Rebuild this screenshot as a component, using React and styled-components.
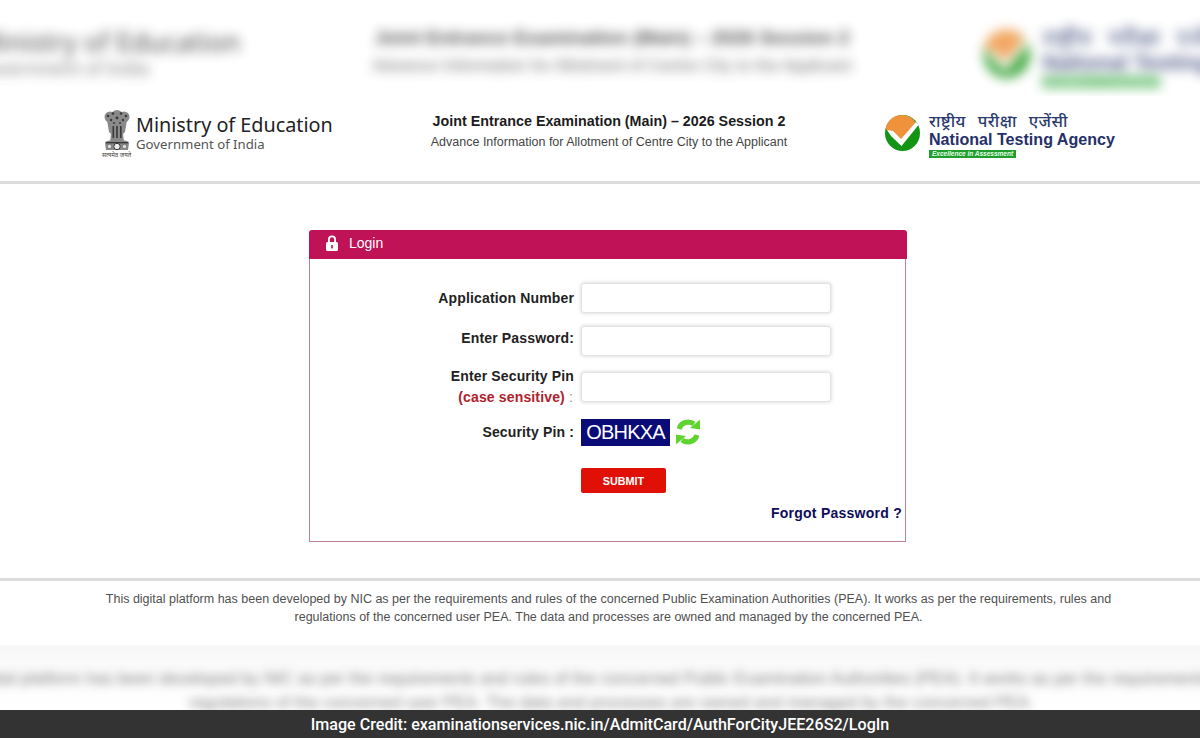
import React from "react";
import styled, { createGlobalStyle } from "styled-components";

const Global = createGlobalStyle`
  html, body { margin: 0; padding: 0; background: #fff; }
  * { box-sizing: border-box; }
  body { font-family: "Liberation Sans", Arial, sans-serif; }
`;

const Page = styled.div`
  width: 1200px;
  height: 738px;
  overflow: hidden;
  display: flex;
  flex-direction: column;
  background: #fff;
`;

const BlurBand = styled.div`
  height: ${p => p.$h}px;
  flex: none;
  overflow: hidden;
  background: ${p => p.$bg || "#fff"};
`;

const BlurLayer = styled.div`
  transform: translateY(${p => p.$y}px) scale(1.345);
  transform-origin: top center;
  filter: blur(${p => p.$blur}px);
  opacity: ${p => p.$op};
`;

const Masthead = styled.header`
  height: 85px;
  flex: none;
  display: flex;
  justify-content: space-between;
  padding: 14px 85px 0 100px;
`;

const Brand = styled.div`
  display: flex;
  width: 233px;
  height: 50px;
  gap: 3px;
`;

const EmblemBox = styled.div`
  width: 33px;
  flex: none;
  display: flex;
  flex-direction: column;
  align-items: center;
`;

const EmblemMotto = styled.span`
  font: 6px/7px "Noto Sans", "Noto Sans Devanagari", "Liberation Sans", sans-serif;
  color: #444;
  white-space: nowrap;
`;

const BrandText = styled.div`
  font-family: "Noto Sans", "Open Sans", sans-serif;
  padding-top: 2px;
`;

const Ministry = styled.div`
  font-size: 19.8px;
  line-height: 26px;
  color: #222;
  white-space: nowrap;
`;

const Government = styled.div`
  font-size: 13.2px;
  line-height: 13px;
  color: #555;
  white-space: nowrap;
`;

const Exam = styled.div`
  width: 357px;
  text-align: center;
  padding-top: 2px;
`;

const ExamTitle = styled.div`
  font-size: 14.3px;
  font-weight: 700;
  line-height: 18px;
  color: #1c1c1c;
  white-space: nowrap;
`;

const ExamSub = styled.div`
  font-size: 12.5px;
  line-height: 16px;
  margin-top: 4px;
  color: #444;
  white-space: nowrap;
`;

const Agency = styled.div`
  display: flex;
  width: 230px;
  gap: 9px;
`;

const AgencyMark = styled.svg`
  width: 35px;
  height: 36px;
  margin-top: 5px;
  flex: none;
`;

const AgencyLines = styled.div`
  padding-top: 2px;
`;

const AgencyHindi = styled.div`
  font: 500 16.5px/18px "Noto Sans", "Noto Sans Devanagari", sans-serif;
  color: #2a3a6e;
  letter-spacing: .5px;
  white-space: nowrap;
  word-spacing: 7px;
`;

const AgencyName = styled.div`
  font-size: 16.1px;
  font-weight: 700;
  line-height: 19px;
  color: #25306a;
  white-space: nowrap;
`;

const AgencyTag = styled.div`
  width: 87px;
  height: 8px;
  margin-top: 1px;
  background: #1f9e2d;
  color: #e8ffe8;
  font-size: 6.5px;
  font-style: italic;
  font-weight: 700;
  line-height: 8px;
  padding-left: 3px;
  white-space: nowrap;
`;

const Rule = styled.div`
  height: 3px;
  flex: none;
  background: #dcdcdc;
`;

const Main = styled.main`
  height: 394px;
  flex: none;
  padding: 46px 0 0 309px;
`;

const Card = styled.section`
  width: 597px;
  height: 312px;
`;

const CardHead = styled.div`
  width: 598px;
  height: 29px;
  background: #bf1257;
  border-radius: 3px 3px 0 0;
  display: flex;
  align-items: center;
  gap: 10px;
  padding: 0 0 3px 16px;
  color: #fff;
  font-size: 14px;
`;

const LockIcon = styled.svg`
  width: 14px;
  height: 16px;
  flex: none;
`;

const CardBody = styled.div`
  height: 283px;
  border: 1px solid #bb7e92;
  border-top: 0;
  padding-top: 24px;
`;

const Row = styled.div`
  display: grid;
  grid-template-columns: 264px 250px;
  column-gap: 7px;
  align-items: center;
  margin-top: ${p => p.$top || 0}px;
`;

const Label = styled.label`
  text-align: right;
  font-size: 14px;
  font-weight: 700;
  letter-spacing: .15px;
  color: #222;
  white-space: nowrap;
  line-height: 21px;
  padding-bottom: ${p => p.$lift || 0}px;
`;

const Sensitive = styled.span`
  color: #b0212c;
`;

const Colon = styled.span`
  color: #999;
  font-weight: 400;
  padding-right: 1px;
`;

const Input = styled.input`
  width: 250px;
  height: 30px;
  border: 1px solid #e2e2e2;
  border-radius: 3px;
  background: #fff;
  box-shadow: 0 0 4px rgba(0, 0, 0, .18);
  padding: 0;
  outline: none;
`;

const CaptchaWrap = styled.div`
  display: flex;
  align-items: center;
  gap: 4px;
`;

const Captcha = styled.div`
  width: 89px;
  height: 27px;
  background: #0b0b78;
  color: #fff;
  font-size: 20px;
  line-height: 27px;
  letter-spacing: -.8px;
  text-align: center;
`;

const RefreshIcon = styled.svg`
  width: 28px;
  height: 28px;
  flex: none;
`;

const Submit = styled.button`
  width: 85px;
  height: 25px;
  margin: 0;
  padding: 0;
  border: 0;
  border-radius: 2px;
  background: #e01006;
  color: #fff;
  font: 700 10.8px "Liberation Sans", sans-serif;
`;

const Forgot = styled.a`
  display: block;
  text-align: right;
  padding-right: 3px;
  margin-top: 10px;
  font-size: 14px;
  line-height: 20px;
  font-weight: 700;
  letter-spacing: .25px;
  color: #0d0d5c;
`;

const Disclaimer = styled.p`
  margin: 0;
  height: 64px;
  flex: none;
  padding: 9px 80px 0 97px;
  text-align: center;
  font-size: 12.5px;
  line-height: 18px;
  color: #505050;
`;

const Credit = styled.footer`
  height: 28px;
  flex: none;
  background: #333;
  color: #fff;
  font: 500 16.1px/29px Roboto, sans-serif;
  text-align: center;
  white-space: nowrap;
`;

const Emblem = () => (
  <svg width="28" height="42" viewBox="0 0 28 42">
    <g fill="#8a8a8a">
      <circle cx="7" cy="7" r="5.5" />
      <circle cx="14" cy="6" r="6" />
      <circle cx="21" cy="7" r="5.5" />
      <path d="M4 10h20l-2 12-2 2 1 8H7l1-8-2-2z" />
      <path d="M2 33c0-2 4-3 12-3s12 1 12 3l-1 7H3z" />
    </g>
    <g fill="#3a3a3a">
      <circle cx="5" cy="6" r="1.3" /><circle cx="10" cy="3.5" r="1.3" />
      <circle cx="18" cy="3.5" r="1.3" /><circle cx="23" cy="6" r="1.3" />
      <circle cx="8" cy="10" r="1.2" /><circle cx="14" cy="8" r="1.4" /><circle cx="20" cy="10" r="1.2" />
      <circle cx="11" cy="13" r="1" /><circle cx="17" cy="13" r="1" />
      <rect x="9.5" y="16" width="1.6" height="12" /><rect x="13.2" y="16" width="1.6" height="12" /><rect x="17" y="16" width="1.6" height="12" />
      <rect x="3" y="32" width="22" height="1.4" />
    </g>
    <circle cx="14" cy="36.5" r="3.2" fill="#eee" stroke="#333" />
    <circle cx="6.5" cy="36.5" r="2.2" fill="#ddd" stroke="#555" strokeWidth=".6" />
    <circle cx="21.5" cy="36.5" r="2.2" fill="#ddd" stroke="#555" strokeWidth=".6" />
  </svg>
);

const Head = () => (
  <Masthead>
    <Brand>
      <EmblemBox>
        <Emblem />
        <EmblemMotto>सत्यमेव जयते</EmblemMotto>
      </EmblemBox>
      <BrandText>
        <Ministry>Ministry of Education</Ministry>
        <Government>Government of India</Government>
      </BrandText>
    </Brand>
    <Exam>
      <ExamTitle>Joint Entrance Examination (Main) – 2026 Session 2</ExamTitle>
      <ExamSub>Advance Information for Allotment of Centre City to the Applicant</ExamSub>
    </Exam>
    <Agency>
      <AgencyMark viewBox="0 0 35 36">
        <ellipse cx="17.5" cy="18" rx="17.5" ry="18" fill="#149414" />
        <path d="M17.5 0C8 0 2 6 .6 14L8 19l8 8L31 8C28 3 23 0 17.5 0z" fill="#f0923c" />
        <path d="M2 15l6 1 8 8L31 7l2.5 3L16.5 31 6 21z" fill="#fff" />
      </AgencyMark>
      <AgencyLines>
        <AgencyHindi>राष्ट्रीय परीक्षा एजेंसी</AgencyHindi>
        <AgencyName>National Testing Agency</AgencyName>
        <AgencyTag>Excellence in Assessment</AgencyTag>
      </AgencyLines>
    </Agency>
  </Masthead>
);

const footerText =
  "This digital platform has been developed by NIC as per the requirements and rules of the concerned Public Examination Authorities (PEA). It works as per the requirements, rules and regulations of the concerned user PEA. The data and processes are owned and managed by the concerned PEA.";

export default function App() {
  return (
    <Page>
      <Global />
      <BlurBand $h={96}>
        <BlurLayer $y={4} $blur={4.2} $op={0.8}>
          <Head />
        </BlurLayer>
      </BlurBand>
      <Head />
      <Rule />
      <Main>
        <Card>
          <CardHead>
            <LockIcon viewBox="0 0 14 16">
              <path d="M3 7V4.5a4 4 0 0 1 8 0V7H9.2V4.5a2.2 2.2 0 0 0-4.4 0V7z" fill="#fff" />
              <rect x="1" y="7" width="12" height="9" rx="1.5" fill="#fff" />
              <rect x="6.2" y="10" width="1.6" height="3.4" fill="#bf1257" />
            </LockIcon>
            Login
          </CardHead>
          <CardBody>
            <Row>
              <Label>Application Number</Label>
              <Input />
            </Row>
            <Row $top={13}>
              <Label $lift={6}>Enter Password:</Label>
              <Input />
            </Row>
            <Row $top={10}>
              <Label>
                Enter Security Pin
                <br />
                <Sensitive>(case sensitive)</Sensitive> <Colon>:</Colon>
              </Label>
              <Input />
            </Row>
            <Row $top={10}>
              <Label>Security Pin :</Label>
              <CaptchaWrap>
                <Captcha>OBHKXA</Captcha>
                <RefreshIcon viewBox="0 0 28 28">
                  <g fill="none" stroke="#5fd431" strokeWidth="5.2">
                    <path d="M5 11a9.6 9.6 0 0 1 15-5" />
                    <path d="M23 17a9.6 9.6 0 0 1-15 5" />
                  </g>
                  <path d="M16 10l10 1.5V1.5z" fill="#5fd431" />
                  <path d="M12 18L2 16.5v10z" fill="#5fd431" />
                </RefreshIcon>
              </CaptchaWrap>
            </Row>
            <Row $top={22}>
              <span />
              <Submit type="button">SUBMIT</Submit>
            </Row>
            <Forgot>Forgot Password ?</Forgot>
          </CardBody>
        </Card>
      </Main>
      <Rule />
      <Disclaimer>{footerText}</Disclaimer>
      <BlurBand $h={65} $bg="linear-gradient(#f7f7f7, #fbfbfb 40%, #fff)">
        <BlurLayer $y={9} $blur={3.6} $op={0.75}>
          <Disclaimer>{footerText}</Disclaimer>
        </BlurLayer>
      </BlurBand>
      <Credit>Image Credit: examinationservices.nic.in/AdmitCard/AuthForCityJEE26S2/LogIn</Credit>
    </Page>
  );
}
